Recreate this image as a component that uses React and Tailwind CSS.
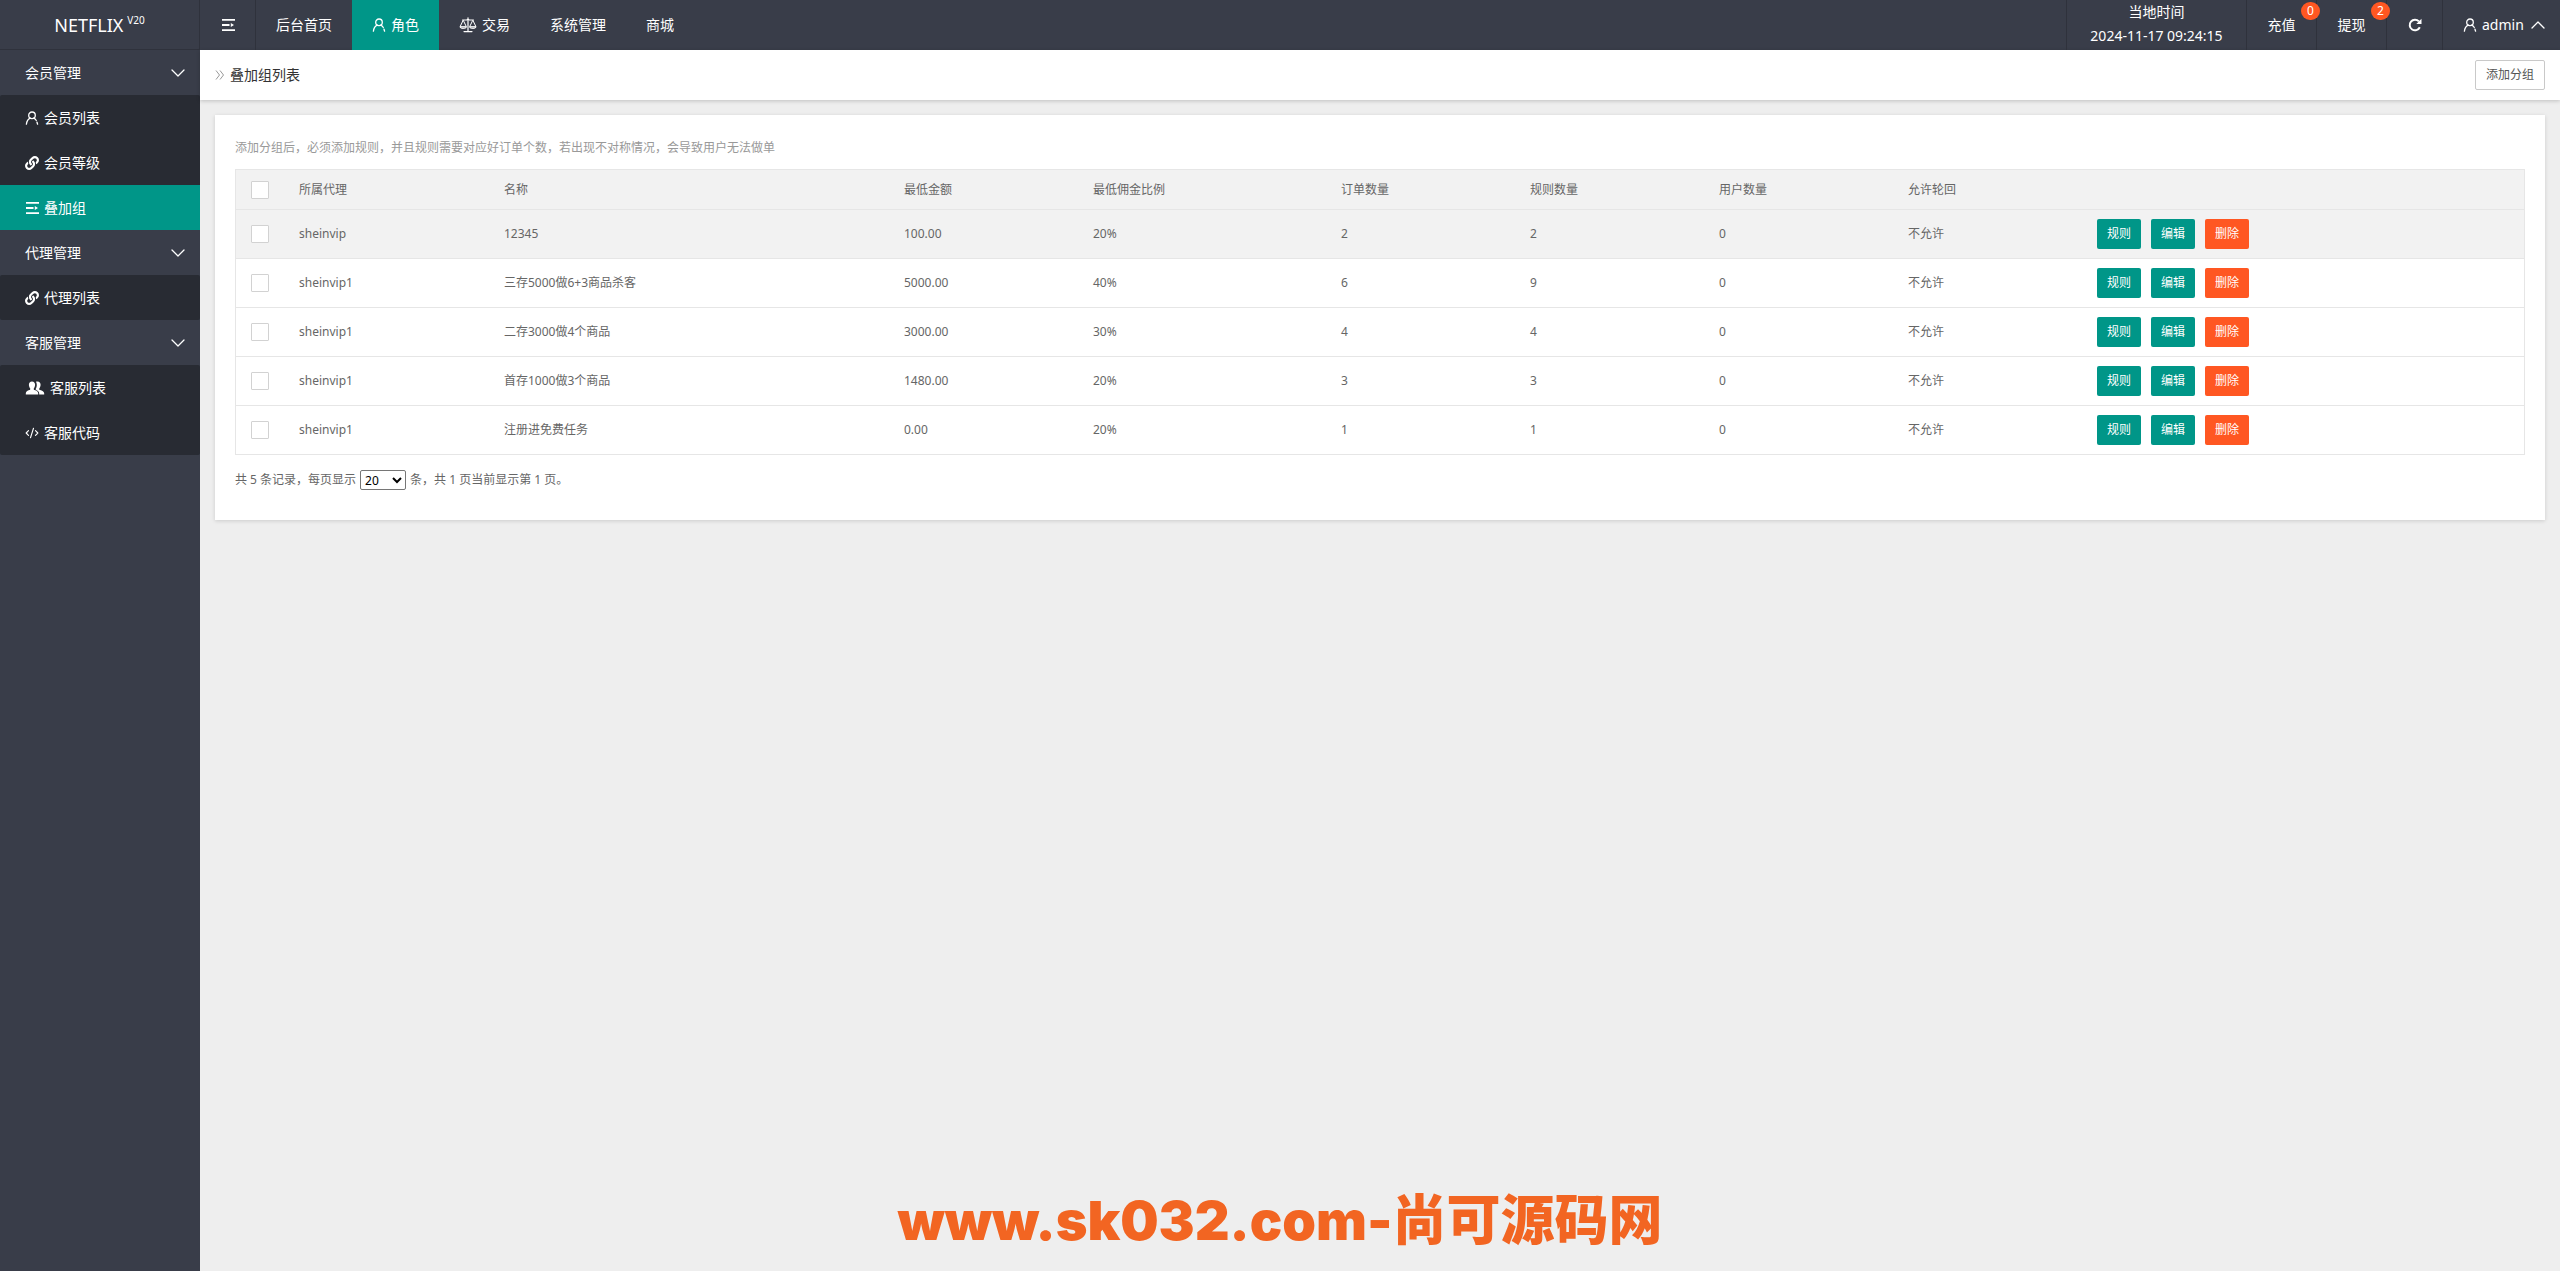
import React from 'react';
import { ChevronDown, ChevronUp, CodeXml } from 'lucide-react';
import { FaLink } from 'react-icons/fa';

const UserIcon = () => (
  <svg width="14" height="14" viewBox="0 0 14 14" fill="none" stroke="currentColor" strokeWidth="1.3" className="shrink-0">
    <circle cx="7" cy="4.3" r="3.3" />
    <path d="M5.3 7.1C3 8.1 1.7 10.4 1.4 13.2M8.7 7.1c1.3.6 2 1.4 2.6 2.4M12.6 13.2l-.6-2" strokeLinecap="round" />
  </svg>
);

const ListIcon = () => (
  <svg width="14" height="14" viewBox="0 0 14 14" fill="currentColor" className="shrink-0">
    <path d="M1 1h13v1.800H1zM1 6.100h7.500v1.800H1zM1 11.200h13V13H1zM9.800 4.900v4.200L13 7z" />
  </svg>
);

const ScaleIcon = () => (
  <svg width="18" height="16" viewBox="0 0 18 16" fill="none" stroke="currentColor" strokeWidth="1.2" className="shrink-0">
    <path d="M9 .8v13.400M3.500 3h4.200c.7-.9 1.900-.9 2.600 0h4.200M5 14.600h8" strokeLinecap="round" />
    <path d="M4.200 3.200L1 9.800h6.400zM13.800 3.200l-3.200 6.600H17z" strokeWidth="1" strokeLinejoin="round" />
    <path d="M1 10c.5 2 5.900 2 6.400 0zM10.600 10c.5 2 5.900 2 6.400 0z" strokeWidth="1" />
  </svg>
);

const FriendsIcon = () => (
  <svg width="20" height="16" viewBox="0 0 20 16" fill="currentColor" className="shrink-0">
    <path d="M7 1.4c2 0 3.1 1.400 3.100 3.400 0 1.500-.6 2.800-1.300 3.600-.3.800.1 1.400.8 1.700 2 .9 3.600 1.300 3.600 3.500v.9H.8v-.9c0-2.200 1.600-2.600 3.600-3.500.7-.3 1.100-.9.8-1.700-.7-.8-1.300-2.100-1.300-3.600 0-2 1.100-3.400 3.100-3.400z" />
    <path d="M11 1.700c.4-.2.9-.3 1.500-.3 2 0 3.100 1.400 3.100 3.400 0 1.500-.6 2.800-1.300 3.600-.3.800.1 1.400.8 1.700 2 .9 4.100 1.300 4.100 3.500v.9h-5v-1c0-1.900-1.300-2.700-2.600-3.300-.9-.4-1.100-.9-.8-1.400.6-.9 1-2.300 1-3.800 0-1.300-.3-2.400-.8-3.300z" />
  </svg>
);

const RefreshIcon = () => (
  <svg width="14" height="14" viewBox="0 0 14 14" fill="none" stroke="currentColor" strokeWidth="2">
    <path d="M11.8 9.300A5.300 5.300 0 1 1 10.900 3.400" />
    <path d="M13.500.8v5.200H8.300z" fill="currentColor" stroke="none" />
  </svg>
);

const DoubleArrow = () => (
  <svg width="10" height="12" viewBox="0 0 10 12" fill="none" stroke="#999" className="shrink-0">
    <path d="M1 1.500L4.500 6 1 10.500M5 1.500L8.500 6 5 10.500" />
  </svg>
);

const menu = [
  {
    title: '会员管理',
    items: [
      { label: '会员列表', icon: <UserIcon /> },
      { label: '会员等级', icon: <FaLink size={14} /> },
      { label: '叠加组', icon: <ListIcon />, active: true },
    ],
  },
  {
    title: '代理管理',
    items: [{ label: '代理列表', icon: <FaLink size={14} /> }],
  },
  {
    title: '客服管理',
    items: [
      { label: '客服列表', icon: <FriendsIcon /> },
      { label: '客服代码', icon: <CodeXml size={14} /> },
    ],
  },
];

const topNav = [
  { label: '后台首页' },
  { label: '角色', icon: <UserIcon />, active: true },
  { label: '交易', icon: <ScaleIcon /> },
  { label: '系统管理' },
  { label: '商城' },
];

const columns = ['所属代理', '名称', '最低金额', '最低佣金比例', '订单数量', '规则数量', '用户数量', '允许轮回'];

const rows = [
  ['sheinvip', '12345', '100.00', '20%', '2', '2', '0', '不允许'],
  ['sheinvip1', '三存5000做6+3商品杀客', '5000.00', '40%', '6', '9', '0', '不允许'],
  ['sheinvip1', '二存3000做4个商品', '3000.00', '30%', '4', '4', '0', '不允许'],
  ['sheinvip1', '首存1000做3个商品', '1480.00', '20%', '3', '3', '0', '不允许'],
  ['sheinvip1', '注册进免费任务', '0.00', '20%', '1', '1', '0', '不允许'],
];

const Checkbox = ({ label }) => (
  <input
    type="checkbox"
    aria-label={label}
    className="block w-[18px] h-[18px] appearance-none bg-white border border-[#d2d2d2] rounded-[1px] checked:bg-[#009688]"
  />
);

function Sidebar() {
  return (
    <aside className="w-[200px] shrink-0 bg-[#393d49] text-white">
      <div className="h-[50px] flex items-center justify-center border-b border-r border-[#2f323c] text-lg">
        <span>NETFLIX</span>
        <sup className="ml-1 text-[10px]">V20</sup>
      </div>
      <nav>
        {menu.map((group) => (
          <div key={group.title}>
            <button className="w-full h-[45px] pl-[25px] pr-[10px] flex items-center justify-between">
              {group.title}
              <ChevronDown size={24} strokeWidth={1.3} />
            </button>
            <div className="bg-[#282b33] rounded-[2px]">
              {group.items.map((item) => (
                <a
                  key={item.label}
                  href="#"
                  className={`h-[45px] pl-[25px] flex items-center gap-[5px] ${item.active ? 'bg-[#009688]' : ''}`}
                >
                  {item.icon}
                  {item.label}
                </a>
              ))}
            </div>
          </div>
        ))}
      </nav>
    </aside>
  );
}

function Header() {
  return (
    <header className="h-[50px] bg-[#393d49] text-white flex justify-between">
      <nav className="flex">
        <button aria-label="menu" className="w-14 flex items-center justify-center border-r border-[#2f323c]">
          <ListIcon />
        </button>
        {topNav.map((item) => (
          <a
            key={item.label}
            href="#"
            className={`px-5 flex items-center gap-[5px] ${item.active ? 'bg-[#009688]' : ''}`}
          >
            {item.icon}
            {item.label}
          </a>
        ))}
      </nav>

      <div className="flex">
        <div className="w-[181px] border-x border-[#2f323c] text-center leading-6">
          <div>当地时间</div>
          <div>2024-11-17 09:24:15</div>
        </div>
        <a href="#" className="relative w-[70px] flex items-center justify-center border-r border-[#2f323c]">
          充值
          <span className="absolute top-[2px] right-[-4px] z-10 w-[19px] h-[18px] rounded-full bg-[#ff5722] text-xs leading-[18px] text-center">0</span>
        </a>
        <a href="#" className="relative w-[70px] flex items-center justify-center border-r border-[#2f323c]">
          提现
          <span className="absolute top-[2px] right-[-4px] z-10 w-[19px] h-[18px] rounded-full bg-[#ff5722] text-xs leading-[18px] text-center">2</span>
        </a>
        <button aria-label="refresh" className="w-14 flex items-center justify-center border-r border-[#2f323c]">
          <RefreshIcon />
        </button>
        <button className="w-[117px] pl-5 pr-[10px] flex items-center">
          <UserIcon />
          <span className="ml-[5px] mr-auto">admin</span>
          <ChevronUp size={24} strokeWidth={1.3} />
        </button>
      </div>
    </header>
  );
}

function GroupTable() {
  return (
    <table className="w-full table-fixed border-separate border-spacing-0 border-t border-x border-[#e6e6e6] text-left text-[#666]">
      <colgroup>
        <col className="w-12" />
        <col className="w-[205px]" />
        <col className="w-[400px]" />
        <col className="w-[189px]" />
        <col className="w-[248px]" />
        <col className="w-[189px]" />
        <col className="w-[189px]" />
        <col className="w-[189px]" />
        <col className="w-[189px]" />
        <col />
      </colgroup>
      <thead>
        <tr className="h-10 bg-[#f2f2f2]">
          <th className="pl-[15px] border-b border-[#e6e6e6]"><Checkbox label="全选" /></th>
          {columns.map((name) => (
            <th key={name} className="px-[15px] font-normal border-b border-[#e6e6e6]">{name}</th>
          ))}
          <th className="border-b border-[#e6e6e6]"></th>
        </tr>
      </thead>
      <tbody>
        {rows.map((row, i) => (
          <tr key={i} className="h-[49px] first:bg-[#f2f2f2] hover:bg-[#f2f2f2]">
            <td className="pl-[15px] border-b border-[#e6e6e6]"><Checkbox label={row[1]} /></td>
            {row.map((cell, j) => (
              <td key={j} className="px-[15px] border-b border-[#e6e6e6]">{cell}</td>
            ))}
            <td className="px-[15px] border-b border-[#e6e6e6]">
              <div className="flex gap-[10px] text-white">
                <button className="w-11 h-[30px] rounded-[2px] bg-[#009688]">规则</button>
                <button className="w-11 h-[30px] rounded-[2px] bg-[#009688]">编辑</button>
                <button className="w-11 h-[30px] rounded-[2px] bg-[#ff5722]">删除</button>
              </div>
            </td>
          </tr>
        ))}
      </tbody>
    </table>
  );
}

export default function App() {
  return (
    <div className="min-h-screen flex bg-[#eee] text-sm font-['Noto_Sans','Noto_Sans_CJK_SC',sans-serif]">
      <Sidebar />

      <div className="flex-1 min-w-0">
        <Header />

        {/* Title bar */}
        <div className="h-[50px] px-[15px] flex items-center justify-between bg-white shadow-[0_1px_4px_rgba(0,0,0,0.2)]">
          <h1 className="flex items-center gap-[5px] text-[#333]">
            <DoubleArrow />
            叠加组列表
          </h1>
          <button className="w-[70px] h-[30px] border border-[#c9c9c9] rounded-[2px] text-xs text-[#555]">添加分组</button>
        </div>

        {/* Group list */}
        <main className="m-[15px] px-5 pt-6 pb-[30px] bg-white text-xs text-[#666] shadow-[0_1px_4px_rgba(0,0,0,0.15)]">
          <p className="mb-3 leading-[18px] text-[#999]">
            添加分组后，必须添加规则，并且规则需要对应好订单个数，若出现不对称情况，会导致用户无法做单
          </p>
          <GroupTable />
          <div className="mt-[15px] flex items-center gap-1">
            <label htmlFor="limit">共 5 条记录，每页显示</label>
            <select id="limit" defaultValue="20" className="w-[46px] h-5 border border-[#767676] rounded-[2px] bg-white text-black">
              <option>10</option>
              <option>20</option>
              <option>50</option>
            </select>
            <span>条，共 1 页当前显示第 1 页。</span>
          </div>
        </main>
      </div>

      {/* Site mark */}
      <div className="fixed bottom-5 inset-x-0 flex items-center justify-center text-[#f26522] font-black text-[54px] leading-[60px] font-['Inter','Noto_Sans_CJK_SC',sans-serif] pointer-events-none">
        www.sk032.com-尚可源码网
      </div>
    </div>
  );
}
